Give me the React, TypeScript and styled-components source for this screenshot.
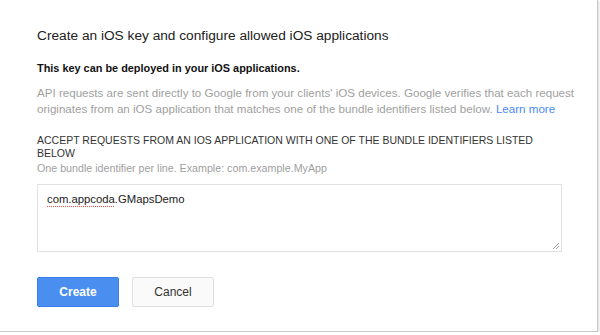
import React from 'react';
import styled, { createGlobalStyle } from 'styled-components';

const GlobalStyle = createGlobalStyle`
  html, body {
    margin: 0;
    padding: 0;
    background: #ffffff;
  }
  body {
    font-family: "Liberation Sans", Arial, sans-serif;
    -webkit-font-smoothing: antialiased;
  }
`;

const Card = styled.div`
  width: 598px;
  height: 332px;
  box-sizing: border-box;
  background: #ffffff;
  border-right: 1px solid #c8c8c8;
  border-bottom: 1px solid #c8c8c8;
  box-shadow: 1px 1px 2px rgba(0, 0, 0, 0.15);
  padding: 27px 0 0 37px;
`;

const Title = styled.h1`
  margin: 0;
  font-size: 13.7px;
  font-weight: 400;
  line-height: 18px;
  color: #212121;
`;

const Lead = styled.p`
  margin: 15px 0 0;
  font-size: 10.9px;
  font-weight: 700;
  line-height: 16px;
  color: #111111;
`;

const Description = styled.p`
  margin: 9px 0 0;
  white-space: nowrap;
  font-size: 11.6px;
  line-height: 16px;
  color: #a0a0a0;

  a {
    color: #4a8af4;
    text-decoration: none;
  }
`;

const FieldLabel = styled.div`
  margin-top: 17px;
  width: 500px;
  font-size: 10.5px;
  line-height: 13px;
  color: #333333;
  text-transform: uppercase;
`;

const Hint = styled.div`
  margin-top: 1px;
  font-size: 10.7px;
  line-height: 14px;
  color: #a0a0a0;
`;

const TextBox = styled.div`
  position: relative;
  margin-top: 9px;
  width: 525px;
  height: 68px;
  box-sizing: border-box;
  border: 1px solid #e2e2e2;
  padding: 6px 9px;
  font-size: 11.3px;
  line-height: 16px;
  color: #212121;
`;

const Misspelled = styled.span`
  text-decoration: underline dotted #e2574c;
  text-underline-offset: 3px;
`;

const Grip = styled.svg`
  position: absolute;
  right: 1px;
  bottom: 1px;
`;

const Actions = styled.div`
  display: flex;
  gap: 13px;
  margin-top: 25px;
`;

const Button = styled.button<{ primary?: boolean }>`
  width: 82px;
  height: 30px;
  box-sizing: border-box;
  border-radius: 2px;
  font-family: inherit;
  font-size: 12px;
  font-weight: ${p => (p.primary ? 700 : 400)};
  color: ${p => (p.primary ? '#ffffff' : '#333333')};
  background: ${p => (p.primary ? '#4a8ef0' : '#fafafa')};
  border: 1px solid ${p => (p.primary ? '#3b7fe6' : '#e0e0e0')};
  padding: 0;
`;

const App: React.FC = () => (
  <>
    <GlobalStyle />
    <Card>
      <Title>Create an iOS key and configure allowed iOS applications</Title>
      <Lead>This key can be deployed in your iOS applications.</Lead>
      <Description>
        API requests are sent directly to Google from your clients' iOS devices. Google verifies that each request
        <br />
        originates from an iOS application that matches one of the bundle identifiers listed below.{' '}
        <a href="#">Learn more</a>
      </Description>
      <FieldLabel>Accept requests from an iOS application with one of the bundle identifiers listed below</FieldLabel>
      <Hint>One bundle identifier per line. Example: com.example.MyApp</Hint>
      <TextBox>
        <Misspelled>com.appcoda</Misspelled>.GMapsDemo
        <Grip width="9" height="9" viewBox="0 0 9 9">
          <path d="M8 2 L2 8 M8 5 L5 8" stroke="#9a9a9a" strokeWidth="1" fill="none" />
        </Grip>
      </TextBox>
      <Actions>
        <Button primary>Create</Button>
        <Button>Cancel</Button>
      </Actions>
    </Card>
  </>
);

export default App;
